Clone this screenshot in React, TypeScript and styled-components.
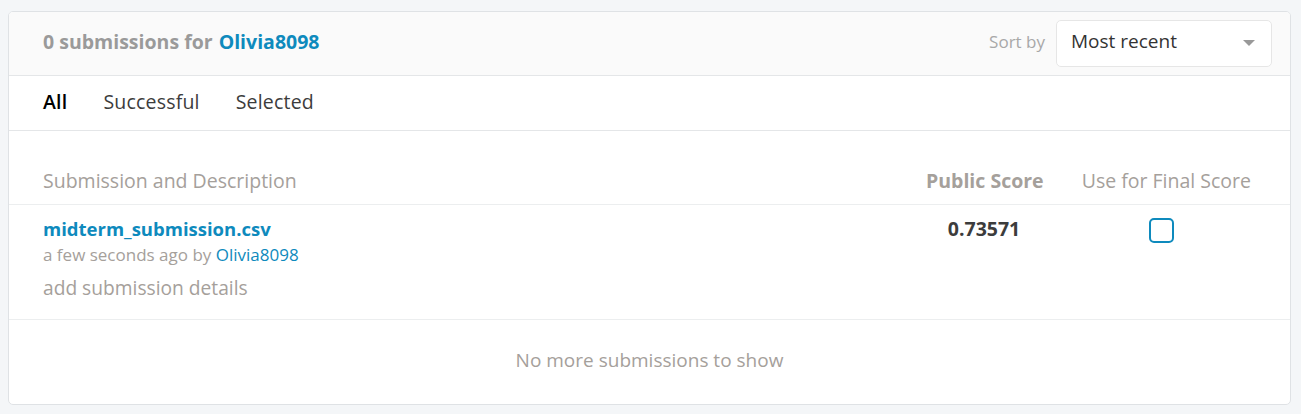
import React from "react";
import styled, { createGlobalStyle } from "styled-components";

const Global = createGlobalStyle`
  html, body { margin: 0; padding: 0; background: #f4f6f8; }
  body { padding: 11px 10px 0 8px; font-family: "Open Sans", "Liberation Sans", sans-serif; }
`;

const Card = styled.div`
  background: #fff;
  border: 1px solid #dfe2e5;
  border-radius: 5px;
  height: 394px;
  box-sizing: border-box;
  overflow: hidden;
  display: flex;
  flex-direction: column;
`;

const Header = styled.div`
  height: 64px;
  background: #fafafa;
  border-bottom: 1px solid #e4e6e8;
  display: flex;
  align-items: center;
  padding: 0 18px 1px 34px;
  box-sizing: border-box;
`;

const Title = styled.div`
  flex: 1;
  font-size: 19.5px;
  font-weight: 700;
  color: #9a9a9a;
  display: flex;
  gap: 6px;
  margin-top: -4px;
`;

const Link = styled.span<{ $bold?: boolean }>`
  color: #0e8abd;
  font-weight: ${(p) => (p.$bold ? 700 : 400)};
`;

const SortLabel = styled.span`
  font-size: 17px;
  color: #a8a8a8;
  margin-right: 11px;
  margin-top: -3px;
`;

const Select = styled.div`
  width: 216px;
  height: 47px;
  box-sizing: border-box;
  border: 1px solid #e6e6e6;
  border-radius: 5px;
  background: #fff;
  display: flex;
  align-items: center;
  justify-content: space-between;
  padding: 0 16px 4px 14px;
  font-size: 19px;
  color: #333;
`;

const Caret = styled.span`
  width: 0;
  height: 0;
  margin-top: 4px;
  border-left: 6px solid transparent;
  border-right: 6px solid transparent;
  border-top: 6px solid #999;
`;

const Tabs = styled.div`
  height: 55px;
  border-bottom: 1px solid #e4e6e8;
  display: flex;
  align-items: center;
  padding: 0 34px;
  gap: 36px;
  box-sizing: border-box;
`;

const Tab = styled.span<{ $active?: boolean }>`
  font-size: 19.5px;
  color: ${(p) => (p.$active ? "#000" : "#3c3c3c")};
  font-weight: ${(p) => (p.$active ? 600 : 400)};
  margin-top: -3px;
  letter-spacing: 0.2px;
`;

const Table = styled.div`
  padding-top: 37px;
`;

const Row = styled.div`
  display: grid;
  grid-template-columns: 1fr 116px 170px;
  column-gap: 39px;
  padding: 0 39px 0 34px;
  border-bottom: 1px solid #eceeef;
`;

const HeadRow = styled(Row)`
  height: 36px;
  align-items: start;
`;

const HeadCell = styled.div<{ $bold?: boolean; $right?: boolean }>`
  font-size: 19.5px;
  color: #a5a09b;
  font-weight: ${(p) => (p.$bold ? 700 : 400)};
  text-align: ${(p) => (p.$right ? "right" : "left")};
  line-height: 26px;
  white-space: nowrap;
`;

const BodyRow = styled(Row)`
  height: 115px;
  padding-top: 12px;
  box-sizing: border-box;
`;

const Info = styled.div`
  display: flex;
  flex-direction: column;
`;

const FileName = styled.span`
  font-size: 18.5px;
  font-weight: 700;
  color: #0e8abd;
  line-height: 24px;
`;

const Meta = styled.span`
  font-size: 17px;
  color: #a5a09b;
  line-height: 22px;
  margin-top: 3px;
`;

const Details = styled.span`
  font-size: 19.2px;
  color: #a5a09b;
  line-height: 26px;
  margin-top: 9px;
`;

const Score = styled.div`
  font-size: 19.5px;
  font-weight: 700;
  color: #3c3c3c;
  line-height: 24px;
  text-align: center;
  white-space: nowrap;
`;

const CheckCell = styled.div`
  display: flex;
  justify-content: center;
  padding-right: 9px;
  padding-top: 1px;
`;

const Check = styled.span`
  width: 25px;
  height: 25px;
  box-sizing: border-box;
  border: 2px solid #0e8abd;
  border-radius: 5px;
  display: block;
`;

const Footer = styled.div`
  flex: 1;
  display: flex;
  align-items: center;
  justify-content: center;
  font-size: 19px;
  color: #a5a09b;
  padding-bottom: 4px;
`;

export default function App() {
  return (
    <>
      <Global />
      <Card>
        <Header>
          <Title>
            <span>0 submissions for</span>
            <Link $bold>Olivia8098</Link>
          </Title>
          <SortLabel>Sort by</SortLabel>
          <Select>
            <span>Most recent</span>
            <Caret />
          </Select>
        </Header>
        <Tabs>
          <Tab $active>All</Tab>
          <Tab>Successful</Tab>
          <Tab>Selected</Tab>
        </Tabs>
        <Table>
          <HeadRow>
            <HeadCell>Submission and Description</HeadCell>
            <HeadCell $bold $right>Public Score</HeadCell>
            <HeadCell $right>Use for Final Score</HeadCell>
          </HeadRow>
          <BodyRow>
            <Info>
              <FileName>midterm_submission.csv</FileName>
              <Meta>
                a few seconds ago by <Link>Olivia8098</Link>
              </Meta>
              <Details>add submission details</Details>
            </Info>
            <Score>0.73571</Score>
            <CheckCell>
              <Check />
            </CheckCell>
          </BodyRow>
        </Table>
        <Footer>No more submissions to show</Footer>
      </Card>
    </>
  );
}
